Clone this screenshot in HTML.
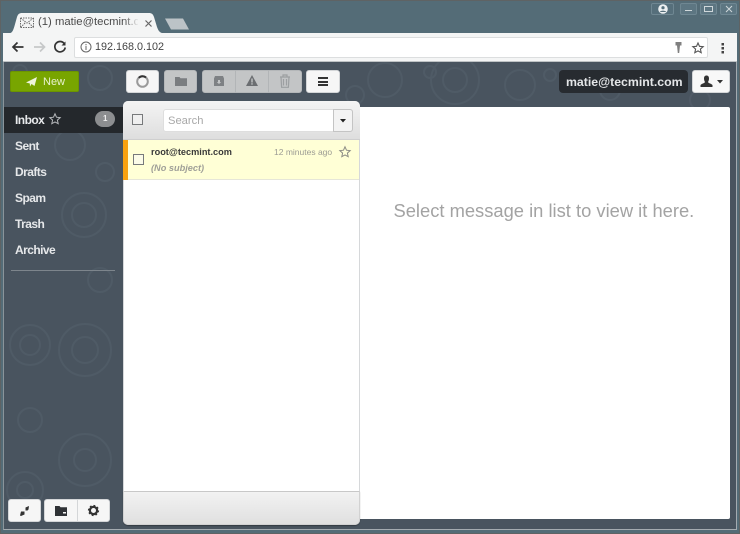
<!DOCTYPE html>
<html><head><meta charset="utf-8"><style>
html,body{margin:0;padding:0}
body{width:740px;height:534px;position:relative;overflow:hidden;background:#546c77;font-family:"Liberation Sans",sans-serif}
.a{position:absolute;box-sizing:border-box}
.t{position:absolute;white-space:nowrap;line-height:1}
.btn{position:absolute;box-sizing:border-box;background:#f6f6f6;border-radius:3px;border:1px solid #d4d6d8}
.dis{background:#c3c5c6;border-color:#b4b7b9}
.nav{position:absolute;left:15px;font-size:12px;font-weight:bold;color:#e6e8ea;line-height:1;letter-spacing:-.55px}
svg{position:absolute;overflow:visible}
</style></head><body>
<div class="a" style="left:0;top:0;width:740px;height:534px;border:1px solid #5f6364"></div>
<div class="a" style="left:3px;top:33px;width:734px;height:29px;background:#f4f5f5"></div>
<div class="a" style="left:3px;top:61px;width:734px;height:1px;background:#bfc3c5"></div>
<div class="a" style="left:3px;top:62px;width:734px;height:468px;background:#49545f;border-left:1px solid #8a949a;border-right:1px solid #a4abb0;border-bottom:1px solid #a4abb0"></div>

<div class="a" style="left:4px;top:62px;width:732px;height:467px;overflow:hidden">
<svg style="left:-4px;top:-62px" width="740" height="534" viewBox="0 0 740 534" fill="none" stroke="#5f6b76">
<g stroke-width="2" opacity=".3">
<circle cx="84" cy="215" r="22"/><circle cx="84" cy="215" r="12"/><circle cx="30" cy="345" r="20"/><circle cx="30" cy="345" r="10"/><circle cx="85" cy="350" r="26"/><circle cx="85" cy="350" r="13"/><circle cx="25" cy="490" r="18"/><circle cx="25" cy="490" r="8"/><circle cx="85" cy="460" r="26"/><circle cx="85" cy="460" r="11"/><circle cx="70" cy="145" r="15"/><circle cx="105" cy="172" r="9"/><circle cx="30" cy="420" r="12"/>
<circle cx="100" cy="280" r="12"/>
<circle cx="455" cy="80" r="24"/><circle cx="455" cy="80" r="12"/><circle cx="520" cy="85" r="15"/><circle cx="430" cy="72" r="6"/><circle cx="385" cy="80" r="17"/><circle cx="550" cy="75" r="6"/><circle cx="610" cy="90" r="10"/><circle cx="100" cy="78" r="12"/><circle cx="700" cy="100" r="10"/>
<circle cx="20" cy="72" r="7"/><circle cx="355" cy="95" r="9"/>
</g></svg></div>

<svg style="left:7px;top:12px" width="190" height="23" viewBox="0 0 190 23"><path d="M1 21.500C5 21.500 6 19 7.500 14L10 5C11 2 12.500 1 15 1H142C144.500 1 146 2 147 5L150 15C151.500 19 153 21.500 158 21.500Z" fill="#f4f5f5"/><path d="M158 6.500H176L182 17.500H164Z" fill="#bcc3c7"/></svg>
<svg style="left:20px;top:17px" width="14" height="12" viewBox="0 0 14 12" fill="none" stroke="#6a6a6a" stroke-width="1"><path stroke-dasharray="1.500 1" d="M.5 1l6.500 5 6.500-5M.5 10.500l5-5M13.500 10.500l-5-5M.5 1h13M.5 10.500h13M.5 1v9.500M13.500 1v9.500"/></svg>
<div class="t" style="left:38px;top:17px;width:100px;overflow:hidden;font-size:11.300px;color:#4a4a4a">(1) matie@tecmint.c</div>
<div class="a" style="left:124px;top:15px;width:15px;height:16px;background:linear-gradient(90deg,rgba(244,245,245,0),#f4f5f5)"></div>
<svg style="left:144px;top:19px" width="9" height="9" viewBox="0 0 9 9" stroke="#666" stroke-width="1.200"><path d="M1.500 1.500l6 6M7.500 1.500l-6 6"/></svg>

<div class="a" style="left:74px;top:37px;width:634px;height:21px;background:#fff;border:1px solid #dcdedf;border-radius:2px"></div>
<svg style="left:11px;top:40px" width="16" height="14" viewBox="0 0 16 14" fill="none" stroke="#333" stroke-width="1.700"><path d="M12.500 7H2M6.500 2.500L2 7l4.500 4.500"/></svg>
<svg style="left:31px;top:40px" width="16" height="14" viewBox="0 0 16 14" fill="none" stroke="#c6c8c9" stroke-width="1.700"><path d="M3 7h10.500M9 2.500L13.500 7 9 11.500"/></svg>
<svg style="left:53px;top:40px" width="14" height="14" viewBox="0 0 14 14" fill="none" stroke="#333" stroke-width="1.700"><path d="M11.500 4A5.200 5.200 0 1 0 12.200 7.500"/><path d="M12.500 1.500v4h-4z" fill="#333" stroke="none"/></svg>
<svg style="left:80px;top:41px" width="12" height="12" viewBox="0 0 12 12" fill="none" stroke="#666" stroke-width="1"><circle cx="6" cy="6" r="5"/><path d="M6 5v4M6 3v1.200"/></svg>
<div class="t" style="left:95px;top:42px;font-size:10.800px;color:#444">192.168.0.102</div>
<svg style="left:674px;top:42px" width="9" height="12" viewBox="0 0 9 12"><path d="M1.500 0h6v3.500H6L5.200 11h-1.400L3 3.500H1.500z" fill="#808080"/></svg>
<svg style="left:692px;top:42px" width="12" height="12" viewBox="0 0 12 12" fill="none" stroke="#555" stroke-width="1.100"><path d="M6 1l1.500 3.300 3.700.4-2.800 2.400.8 3.600L6 8.900l-3.200 1.800.8-3.600L.8 4.700l3.700-.4z"/></svg>
<svg style="left:721px;top:43px" width="4" height="11" viewBox="0 0 4 11" fill="#444"><rect x=".5" width="2.500" height="2.500"/><rect x=".5" y="4" width="2.500" height="2.500"/><rect x=".5" y="8" width="2.500" height="2.500"/></svg>

<div class="a" style="left:651px;top:3px;width:23px;height:12px;border:1px solid #6f8792;border-radius:2px;background:#566f7b"></div>
<svg style="left:658px;top:4px" width="10" height="10" viewBox="0 0 10 10"><circle cx="5" cy="5" r="4.800" fill="#eef1f2"/><circle cx="5" cy="3.700" r="1.600" fill="#566f7b"/><path d="M1.800 8c.7-1.800 5.700-1.800 6.400 0z" fill="#566f7b"/></svg>
<div class="a" style="left:680px;top:3px;width:17px;height:12px;border:1px solid #6f8792;border-radius:2px;background:#5d7682"></div>
<div class="a" style="left:685px;top:10px;width:7px;height:1px;background:#cfd7da"></div>
<div class="a" style="left:700px;top:3px;width:17px;height:12px;border:1px solid #6f8792;border-radius:2px;background:#5d7682"></div>
<div class="a" style="left:704px;top:6px;width:9px;height:6px;border:1px solid #cfd7da"></div>
<div class="a" style="left:720px;top:3px;width:17px;height:12px;border:1px solid #6f8792;border-radius:2px;background:#5d7682"></div>
<svg style="left:725px;top:5px" width="8" height="8" viewBox="0 0 8 8" stroke="#cfd7da" stroke-width="1"><path d="M1 1l6 6M7 1L1 7"/></svg>

<div class="a" style="left:10px;top:71px;width:69px;height:21px;background:#78a500;border-radius:2px;border:1px solid #6c9500"></div>
<svg style="left:26px;top:77px" width="11" height="10" viewBox="0 0 11 10"><path d="M0 5.500L11 0 8.500 9 5.500 7 4 9.500 3.800 6.500z" fill="#eef4dc"/></svg>
<div class="t" style="left:43px;top:77px;font-size:11px;color:#e9f2cf">New</div>

<div class="btn" style="left:126px;top:70px;width:33px;height:23px"></div>
<svg style="left:136px;top:75px" width="13" height="13" viewBox="0 0 13 13" fill="none" stroke-width="2"><circle cx="6.500" cy="6.500" r="5.300" stroke="#9a9a9a"/><path d="M2.800 2.800A5.300 5.300 0 0 1 10 2.500" stroke="#333"/></svg>
<div class="btn dis" style="left:164px;top:70px;width:33px;height:23px"></div>
<svg style="left:175px;top:76px" width="12" height="10" viewBox="0 0 12 10"><path d="M0 1h4.500l1 1.200H12V10H0z" fill="#7a7d80"/></svg>
<div class="btn dis" style="left:202px;top:70px;width:100px;height:23px"></div>
<div class="a" style="left:235px;top:70px;width:1px;height:23px;background:#b2b5b7"></div>
<div class="a" style="left:268px;top:70px;width:1px;height:23px;background:#b2b5b7"></div>
<svg style="left:214px;top:76px" width="10" height="10" viewBox="0 0 10 10"><path d="M1 0h8l1 2.500V10H0V2.500z" fill="#7e8184"/><path d="M4 4h2v2h1.200L5 8 2.800 6H4z" fill="#c3c5c6"/></svg>
<svg style="left:246px;top:75px" width="12" height="11" viewBox="0 0 12 11"><path d="M6 0l6 11H0z" fill="#6b6e71"/><path d="M5.300 3.500h1.400V7.500H5.300zM5.300 8.300h1.400v1.300H5.300z" fill="#c3c5c6"/></svg>
<svg style="left:279px;top:74px" width="12" height="14" viewBox="0 0 12 14" fill="none" stroke="#9c9fa1" stroke-width="1.200"><path d="M1 3h10M4 3V1h4v2M2 3l.6 10.300h6.800L10 3M4.500 5v6.500M7.500 5v6.500"/></svg>
<div class="btn" style="left:306px;top:70px;width:34px;height:23px"></div>
<div class="a" style="left:318px;top:77px;width:10px;height:2px;background:#333"></div>
<div class="a" style="left:318px;top:80.500px;width:10px;height:2px;background:#333"></div>
<div class="a" style="left:318px;top:84px;width:10px;height:2px;background:#333"></div>

<div class="a" style="left:559px;top:70px;width:129px;height:23px;background:#272b30;border-radius:4px"></div>
<div class="t" style="left:566px;top:76px;font-size:12.300px;font-weight:bold;color:#e4e6e8">matie@tecmint.com</div>
<div class="btn" style="left:692px;top:70px;width:38px;height:23px;background:#f8f8f8"></div>
<svg style="left:700px;top:75px" width="13" height="13" viewBox="0 0 13 13"><path d="M4 3.500C4 1.500 5 .5 6.500 .5S9 1.500 9 3.500C9 5.500 8.300 6.300 8 7c0 1 3 1.500 4.500 3v2H.5v-2C2 8.500 5 8 5 7 4.700 6.300 4 5.500 4 3.500z" fill="#333"/></svg>
<svg style="left:717px;top:80px" width="6" height="4" viewBox="0 0 6 4"><path d="M0 0h6L3 3.500z" fill="#333"/></svg>

<div class="a" style="left:4px;top:107px;width:120px;height:26px;background:#24282c"></div>
<div class="nav" style="top:114px;color:#e8eaec">Inbox</div>
<svg style="left:49px;top:113px" width="12" height="12" viewBox="0 0 12 12" fill="none" stroke="#b6b9bc" stroke-width="1"><path d="M6 .8l1.500 3.400 3.700.4-2.800 2.500.8 3.600L6 8.900l-3.200 1.800.8-3.600L.8 4.600l3.700-.4z"/></svg>
<div class="a" style="left:95px;top:111px;width:20px;height:16px;background:#8c8e90;border-radius:8px"></div>
<div class="t" style="left:103px;top:115px;font-size:8px;font-weight:bold;color:#eee">1</div>
<div class="nav" style="top:140px">Sent</div>
<div class="nav" style="top:166px">Drafts</div>
<div class="nav" style="top:192px">Spam</div>
<div class="nav" style="top:218px">Trash</div>
<div class="nav" style="top:244px">Archive</div>
<div class="a" style="left:11px;top:270px;width:104px;height:1px;background:#7d858c"></div>

<div class="btn" style="left:8px;top:499px;width:33px;height:23px"></div>
<svg style="left:20px;top:506px" width="10" height="10" viewBox="0 0 10 10" fill="#333"><path d="M5.500 1.500L9 0 8.500 3.500 7.500 4.500 5.500 4.500V2.500zM1 5.500H4.500V8.500L1 10 0 9.500z"/></svg>
<div class="btn" style="left:44px;top:499px;width:66px;height:23px"></div>
<div class="a" style="left:77px;top:499px;width:1px;height:23px;background:#d4d6d8"></div>
<svg style="left:55px;top:506px" width="12" height="10" viewBox="0 0 12 10"><path d="M0 0h4.500l1 1.300H12V10H0z" fill="#2f3236"/><path d="M8 6h3v1.500H8z" fill="#f6f6f6"/></svg>
<svg style="left:88px;top:505px" width="11" height="11" viewBox="0 0 11 11" fill="none"><circle cx="5.500" cy="5.500" r="3.600" stroke="#333" stroke-width="2.200"/><circle cx="5.500" cy="5.500" r="5" stroke="#333" stroke-width="1.200" stroke-dasharray="1.800 2.100"/></svg>

<div class="a" style="left:360px;top:107px;width:370px;height:412px;background:#fff;border-radius:0 2px 2px 0"></div>
<div class="t" style="left:393.500px;top:202px;font-size:18.350px;color:#a3a3a3">Select message in list to view it here.</div>

<div class="a" style="left:123px;top:101px;width:237px;height:424px;background:#fff;border-radius:5px;border:1px solid #d6d8da"></div>
<div class="a" style="left:123px;top:101px;width:237px;height:39px;background:linear-gradient(#f4f4f4,#dedede);border-radius:5px 5px 0 0;border-bottom:1px solid #cfcfcf"></div>
<div class="a" style="left:132px;top:114px;width:11px;height:11px;border:1px solid #77797b;background:#efefef"></div>
<div class="a" style="left:163px;top:109px;width:190px;height:23px;background:#fff;border-radius:3px;border:1px solid #dedede"></div>
<div class="a" style="left:333px;top:109px;width:20px;height:23px;background:#f3f3f3;border:1px solid #c4c4c4;border-radius:0 3px 3px 0"></div>
<svg style="left:340px;top:119px" width="6" height="4" viewBox="0 0 6 4"><path d="M0 0h6L3 3.500z" fill="#222"/></svg>
<div class="t" style="left:168px;top:116px;font-size:11.200px;color:#a8a8a8">Search</div>

<div class="a" style="left:123px;top:140px;width:236px;height:40px;background:#ffffd6;border-bottom:1px solid #e6e6d8"></div>
<div class="a" style="left:123px;top:140px;width:5px;height:40px;background:#f9a20f"></div>
<div class="a" style="left:133px;top:154px;width:11px;height:11px;border:1px solid #77797b;background:#fbfbe8"></div>
<div class="t" style="left:151px;top:148px;font-size:9.200px;font-weight:bold;color:#3a3a3a">root@tecmint.com</div>
<div class="t" style="left:274px;top:148px;font-size:8.500px;color:#9c9c94">12 minutes ago</div>
<svg style="left:339px;top:146px" width="12" height="12" viewBox="0 0 12 12" fill="none" stroke="#8c8c84" stroke-width="1"><path d="M6 .8l1.500 3.400 3.700.4-2.800 2.500.8 3.600L6 8.900l-3.200 1.800.8-3.600L.8 4.600l3.700-.4z"/></svg>
<div class="t" style="left:151px;top:164px;font-size:9.200px;font-style:italic;font-weight:bold;color:#a0a098">(No subject)</div>

<div class="a" style="left:123px;top:491px;width:237px;height:34px;background:linear-gradient(#f2f2f2,#e0e0e0);border:1px solid #d2d2d2;border-top-color:#c8c8c8;border-radius:0 0 5px 5px;box-shadow:0 1px 1px rgba(0,0,0,.3)"></div>
</body></html>
